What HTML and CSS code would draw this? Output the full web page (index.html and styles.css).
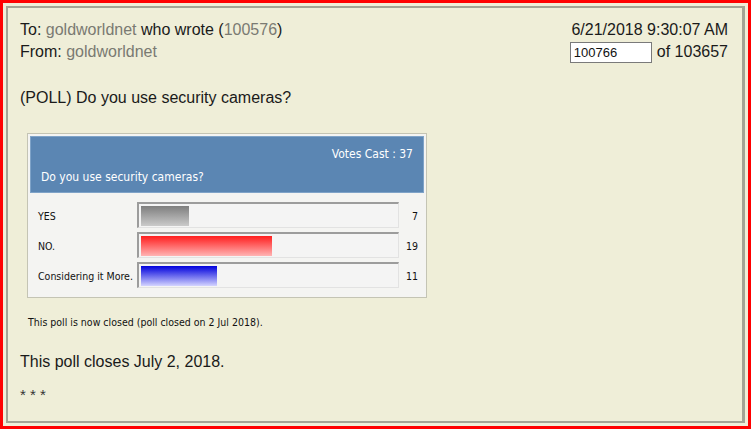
FILE: index.html
```html
<!DOCTYPE html>
<html>
<head>
<meta charset="utf-8">
<link rel="stylesheet" href="styles.css">
</head>
<body>
<div class="frame">
  <div class="panel">
    <div class="head">
      <div class="head-left">
        <div class="line">To: <span class="muted">goldworldnet</span> who wrote (<span class="muted">100576</span>)</div>
        <div class="line">From: <span class="muted">goldworldnet</span></div>
      </div>
      <div class="head-right">
        <div class="line">6/21/2018 9:30:07 AM</div>
        <div class="line nav"><span class="msgbox">100766</span> of 103657</div>
      </div>
    </div>
    <div class="title line">(POLL) Do you use security cameras?</div>
    <div class="poll">
      <div class="poll-head">
        <div class="votes">Votes Cast : 37</div>
        <div class="question">Do you use security cameras?</div>
      </div>
      <div class="rows">
        <div class="row">
          <div class="label">YES</div>
          <div class="track"><div class="bar grey" style="width:18.9%"></div></div>
          <div class="count">7</div>
        </div>
        <div class="row">
          <div class="label">NO.</div>
          <div class="track"><div class="bar red" style="width:51.4%"></div></div>
          <div class="count">19</div>
        </div>
        <div class="row">
          <div class="label">Considering it More.</div>
          <div class="track"><div class="bar blue" style="width:29.7%"></div></div>
          <div class="count">11</div>
        </div>
      </div>
    </div>
    <div class="closed">This poll is now closed (poll closed on 2 Jul 2018).</div>
    <div class="line closes">This poll closes July 2, 2018.</div>
    <div class="line stars">* * *</div>
  </div>
</div>
</body>
</html>
```

FILE: styles.css
```css
html, body {
  margin: 0;
  padding: 0;
  background: #efeed8;
}
.frame {
  box-sizing: border-box;
  width: 751px;
  height: 429px;
  border: 3px solid #ff0000;
  padding: 3px;
  background: #efeed8;
}
.panel {
  box-sizing: border-box;
  height: 100%;
  border: 2px solid #a3a394;
  border-right-width: 3px;
  padding: 11px 14px 0 12px;
  font-family: "Liberation Sans", Arial, sans-serif;
  font-size: 16px;
  color: #1a1a1a;
}
.line {
  line-height: 22px;
  height: 22px;
}
.muted {
  color: #7a7a72;
}
.head {
  display: flex;
  justify-content: space-between;
}
.head-right {
  text-align: right;
}
.nav {
  display: flex;
  align-items: center;
  justify-content: flex-end;
  gap: 5px;
}
.msgbox {
  box-sizing: border-box;
  display: inline-block;
  width: 82px;
  height: 21px;
  border: 1px solid #7a7a7a;
  background: #ffffff;
  font-size: 13px;
  line-height: 19px;
  text-align: left;
  padding-left: 3px;
  color: #111;
}
.title {
  margin-top: 24px;
}
.poll {
  box-sizing: border-box;
  width: 400px;
  height: 165px;
  margin: 24px 0 0 7px;
  border: 1px solid #c4c4b4;
  background: #f4f4f2;
  padding: 2px;
  font-family: "DejaVu Sans Condensed", "DejaVu Sans", Tahoma, sans-serif;
  font-size: 10.5px;
  color: #111;
}
.poll-head {
  box-sizing: border-box;
  height: 57px;
  background: #5b86b3;
  border: 1px solid #7fa3c8;
  color: #ffffff;
  padding: 9px 10px 0 10px;
  display: flex;
  flex-direction: column;
}
.votes {
  text-align: right;
  font-size: 12px;
  line-height: 17px;
}
.question {
  font-size: 12px;
  line-height: 17px;
  margin-top: 6px;
}
.rows {
  display: flex;
  flex-direction: column;
  gap: 4px;
  padding: 9px 0 0 8px;
}
.row {
  display: grid;
  grid-template-columns: 99px 262px 1fr;
  align-items: center;
  height: 26px;
}
.label {
  font-size: 10.5px;
  padding-top: 2px;
}
.track {
  box-sizing: border-box;
  height: 26px;
  border-top: 2px solid #9c9c9c;
  border-left: 2px solid #9c9c9c;
  border-right: 1px solid #e2e2e2;
  border-bottom: 1px solid #e2e2e2;
  background: #f4f4f4;
  padding: 2px;
}
.bar {
  height: 20px;
}
.grey {
  background: linear-gradient(#7e7e7e, #cacaca);
}
.red {
  background: linear-gradient(#ff1e1e, #ffb4b4);
}
.blue {
  background: linear-gradient(#0000dc, #d4d4ff);
}
.count {
  text-align: right;
  padding-right: 6px;
  font-size: 10.5px;
  padding-top: 2px;
}
.closed {
  margin: 17px 0 0 8px;
  font-family: "DejaVu Sans Condensed", "DejaVu Sans", Tahoma, sans-serif;
  font-size: 10.5px;
  line-height: 14px;
  color: #111;
}
.closes {
  margin-top: 22px;
}
.stars {
  margin-top: 11px;
  font-size: 15px;
  color: #333;
}
```
